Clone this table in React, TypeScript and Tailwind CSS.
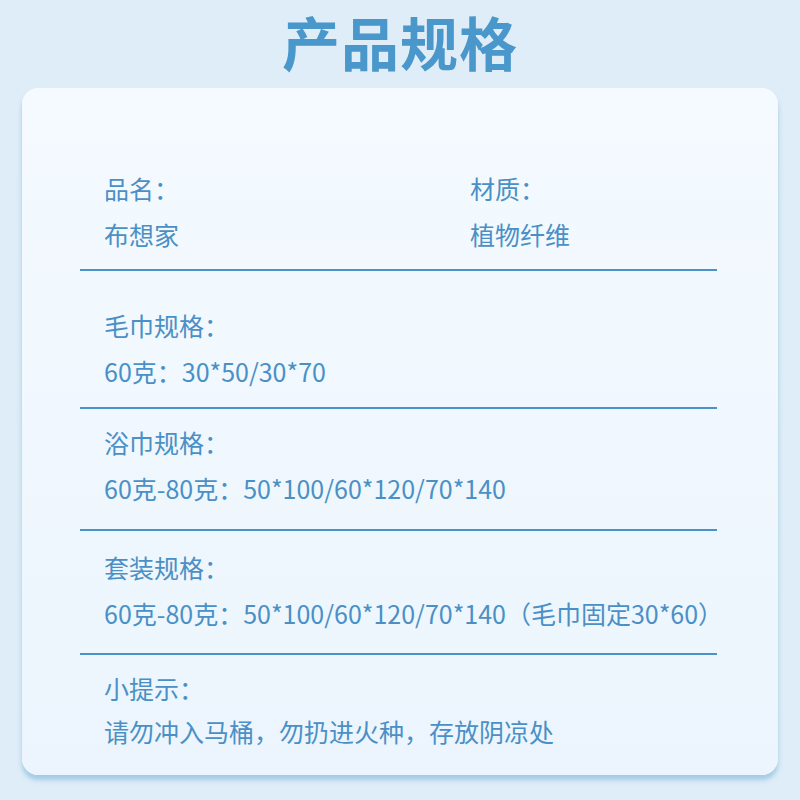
const font = { fontFamily: '"Noto Sans CJK SC", "Noto Sans", sans-serif' };

function Line({ children }: { children: React.ReactNode }) {
  return <p className="h-[46px] text-[25px] leading-[46px] text-[#4a90c6]">{children}</p>;
}

export default function App() {
  return (
    <div className="h-[800px] w-[800px] bg-[#deedf7]" style={font}>
      <div className="flex h-[88px] items-start justify-center">
        <h1 className="text-[58px] font-bold leading-[82px] tracking-[1px] text-[#4a97cb]">产品规格</h1>
      </div>
      <div className="mx-[22px] h-[687px] rounded-[16px] bg-gradient-to-b from-[#f4faff] to-[#ecf5fd] pl-[58px] pr-[61px] pt-[77px] shadow-[0_5px_4px_rgba(150,195,225,0.8)]">
        <div className="flex pb-[12px]">
          <div className="w-[390px] pl-[24px]">
            <Line>品名：</Line>
            <Line>布想家</Line>
          </div>
          <div>
            <Line>材质：</Line>
            <Line>植物纤维</Line>
          </div>
        </div>
        <div className="border-t-2 border-[#4a93c9] pb-[13px] pl-[24px] pt-[31px]">
          <Line>毛巾规格：</Line>
          <Line>60克：30*50/30*70</Line>
        </div>
        <div className="border-t-2 border-[#4a93c9] pb-[18px] pl-[24px] pt-[10px]">
          <Line>浴巾规格：</Line>
          <Line>60克-80克：50*100/60*120/70*140</Line>
        </div>
        <div className="border-t-2 border-[#4a93c9] pb-[17px] pl-[24px] pt-[13px]">
          <Line>套装规格：</Line>
          <Line>60克-80克：50*100/60*120/70*140（毛巾固定30*60）</Line>
        </div>
        <div className="border-t-2 border-[#4a93c9] pl-[24px] pt-[10px]">
          <Line>小提示：</Line>
          <p className="h-[40px] text-[25px] leading-[40px] text-[#4a90c6]">请勿冲入马桶，勿扔进火种，存放阴凉处</p>
        </div>
      </div>
    </div>
  );
}
